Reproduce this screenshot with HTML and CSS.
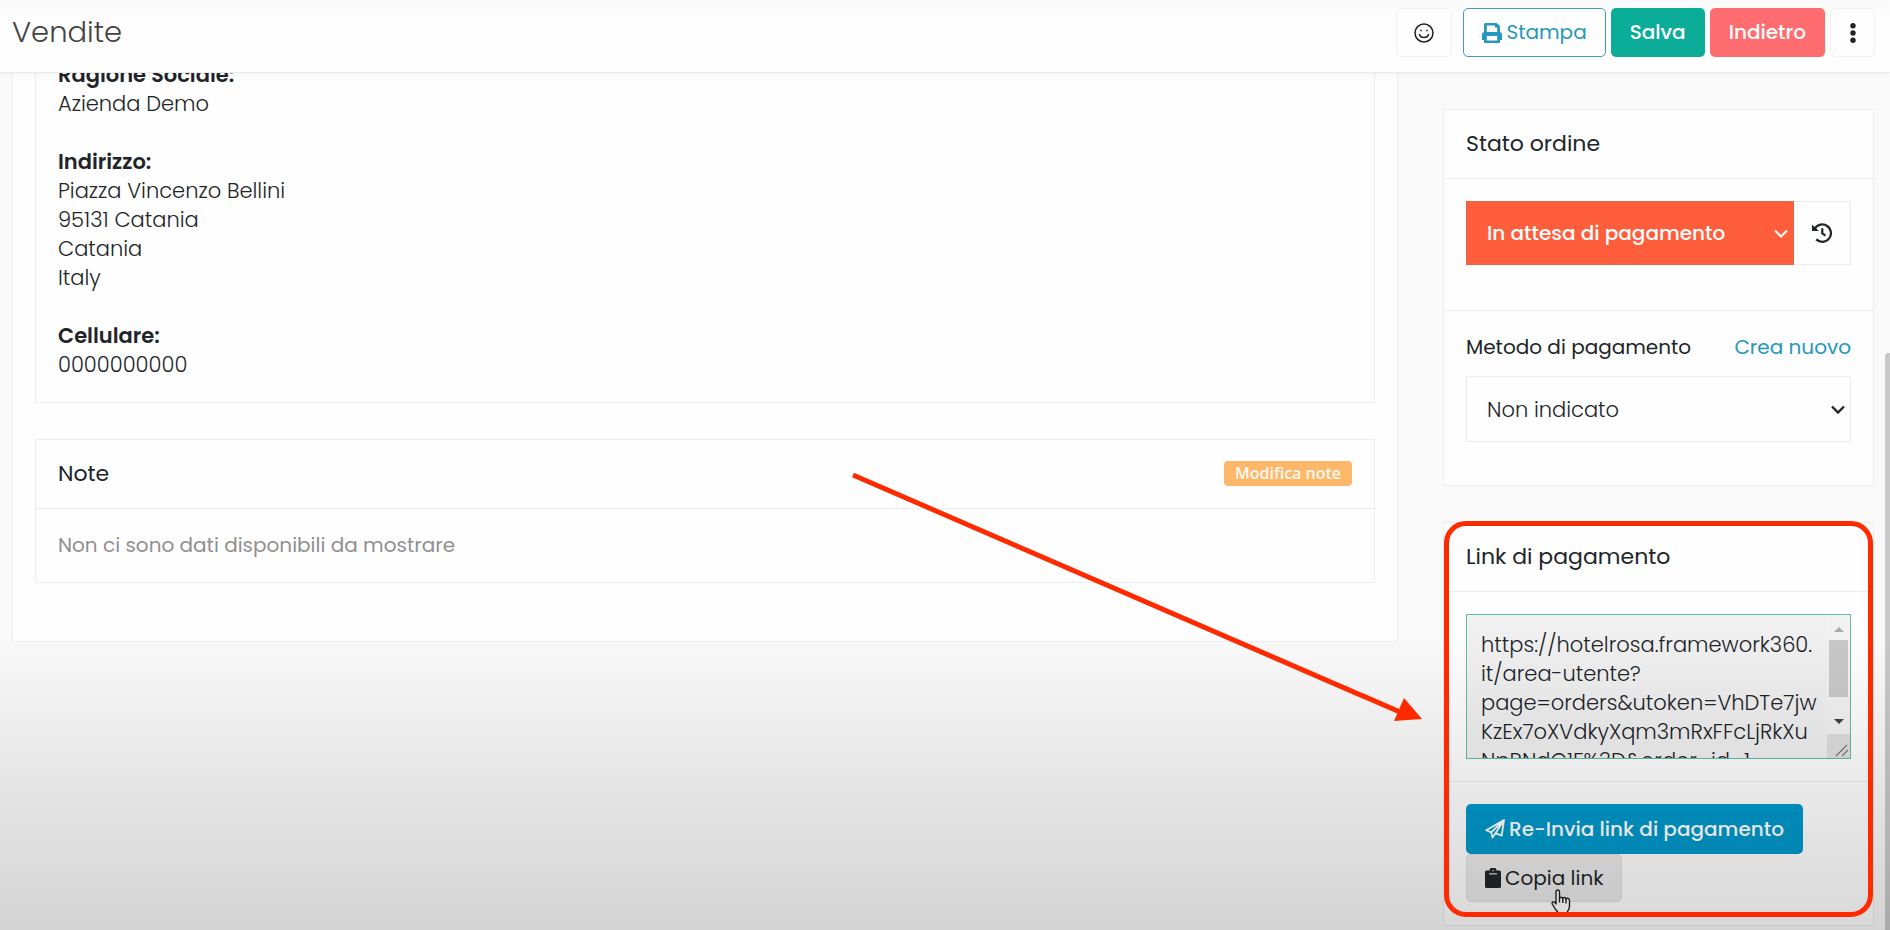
FILE: index.html
```html
<!DOCTYPE html>
<html lang="it">
<head>
<meta charset="utf-8">
<title>Vendite</title>
<link rel="stylesheet" href="styles.css">
</head>
<body>
<header class="topbar">
  <h1 class="topbar-title">Vendite</h1>
  <div class="toolbar">
    <button class="btn btn-light btn-face" type="button" aria-label="Feedback">
      <svg class="icon" viewBox="0 0 20 20" fill="none" stroke="currentColor" stroke-width="1.500" stroke-linecap="round"><circle cx="10" cy="10" r="9"/><path d="M5.500 11.500c1 4 8 4 9 0M7 7.200v.6M13 7.200v.6"/></svg>
    </button>
    <button class="btn btn-outline" type="button">
      <svg class="icon" viewBox="0 0 20 20"><path fill="currentColor" fill-rule="evenodd" d="M3.500 0h11L18 3v6Q20 9 20 11.500V17h-2v3H2v-3H0v-5.500Q0 9 2 9V1.500Q2 0 3.500 0zM4.800 2.500V9h10.400V4.500H13v-2zM4.800 13v4.500h10.400V13z"/></svg>
      Stampa
    </button>
    <button class="btn btn-save" type="button">Salva</button>
    <button class="btn btn-back" type="button">Indietro</button>
    <button class="btn btn-light btn-more" type="button" aria-label="Altro">
      <svg class="icon" viewBox="0 0 20 20" fill="currentColor"><circle cx="10" cy="2.700" r="2.700"/><circle cx="10" cy="10" r="2.700"/><circle cx="10" cy="17.300" r="2.700"/></svg>
    </button>
  </div>
</header>

<main class="page">
  <section class="order">
    <div class="panel customer">
      <dl class="details">
        <dt>Ragione Sociale:</dt>
        <dd>Azienda Demo</dd>
        <dt>Indirizzo:</dt>
        <dd>Piazza Vincenzo Bellini<br>95131 Catania<br>Catania<br>Italy</dd>
        <dt>Cellulare:</dt>
        <dd>0000000000</dd>
      </dl>
    </div>
    <div class="panel">
      <div class="panel-head">
        <h2 class="panel-title">Note</h2>
        <button class="badge" type="button">Modifica note</button>
      </div>
      <p class="empty">Non ci sono dati disponibili da mostrare</p>
    </div>
  </section>

  <aside class="sidebar">
    <section class="panel">
      <div class="panel-head"><h2 class="panel-title" id="status-title">Stato ordine</h2></div>
      <div class="status-body">
        <div class="select-wrap select-status">
          <select class="select" aria-labelledby="status-title"><option>In attesa di pagamento</option></select>
          <svg class="chevron" viewBox="0 0 14 9" fill="none" stroke="currentColor" stroke-width="2"><path d="M1 1.500l6 6 6-6"/></svg>
        </div>
        <button class="history" type="button" aria-label="Cronologia">
          <svg class="icon" viewBox="0 0 20 20" fill="none" stroke="currentColor" stroke-width="2.200"><path d="M2.700 5.800A8.700 8.700 0 1 1 4.200 16.400"/><path d="M0 1.500V8h6.800z" fill="currentColor" stroke="none"/><path d="M10.300 5.200v5.200l3.200 2.200"/></svg>
        </button>
      </div>
      <div class="method">
        <div class="method-head">
          <label for="method">Metodo di pagamento</label>
          <a class="link" href="#">Crea nuovo</a>
        </div>
        <div class="select-wrap">
          <select class="select" id="method"><option>Non indicato</option></select>
          <svg class="chevron" viewBox="0 0 14 9" fill="none" stroke="currentColor" stroke-width="2.400"><path d="M1 1.500l6 6 6-6"/></svg>
        </div>
      </div>
    </section>

    <section class="panel">
      <div class="panel-head"><h2 class="panel-title" id="link-title">Link di pagamento</h2></div>
      <div class="link-body">
        <textarea class="link-text" aria-labelledby="link-title" readonly>https://hotelrosa.framework360.
it/area-utente?
page=orders&amp;utoken=VhDTe7jw
KzEx7oXVdkyXqm3mRxFFcLjRkXu
NpRNdG1F%3D&amp;order_id=1</textarea>
        <div class="bar" aria-hidden="true">
          <span class="bar-up"></span>
          <span class="bar-thumb"></span>
          <span class="bar-down"></span>
          <svg class="grip" viewBox="0 0 23 24" stroke="#777" stroke-width="1.200"><path d="M9 22L20 11M15 22l6-6"/></svg>
        </div>
      </div>
      <div class="link-actions">
        <button class="btn btn-send" type="button">
          <svg class="icon" viewBox="0 0 20 20" fill="none" stroke="currentColor" stroke-width="1.800" stroke-linejoin="round"><path d="M19 1L1.200 11.200l5 2.200L19 1l-2.300 15.600-6.200-2.400-3 4.400-1.300-5.200M10.500 14.200L19 1"/></svg>
          Re-Invia link di pagamento
        </button>
        <button class="btn btn-copy" type="button">
          <svg class="icon icon-clip" viewBox="0 0 16 20"><path fill="currentColor" d="M1.500 2.500H4.500a3.500 3 0 0 1 7 0h3q1.500 0 1.500 1.500v14.500q0 1.500-1.500 1.500h-13Q0 20 0 18.500V4q0-1.500 1.500-1.500z"/><path d="M4 5.800h8M7.300 2.600h1.400" stroke="#d4d3d3" stroke-width="1.300"/></svg>
          Copia link
        </button>
      </div>
      <svg class="pointer" viewBox="0 0 22 26" fill="#fff" stroke="#222" stroke-width="1.400" stroke-linejoin="round"><path d="M6 15V3q0-2 1.700-2T9.500 3v7q0-1.800 1.600-1.800T12.800 10q0-1.500 1.600-1.500T16 10.500q0-1.200 1.500-1.200T19.500 11v6q0 3-2 5.500V26H8v-2.500Q5 20 2.500 15.500 1.500 13.500 3 13t3 2z"/><path d="M9.500 9.500v4M12.800 10v4M16 10.500v4"/></svg>
      <div class="highlight" aria-hidden="true"></div>
    </section>
  </aside>
</main>

<div class="shade" aria-hidden="true"></div>
<div class="page-thumb" aria-hidden="true"></div>
<svg class="arrow" viewBox="0 0 570 252" aria-hidden="true"><path d="M1 3L548 240" stroke="#ff2a00" stroke-width="5" fill="none"/><path d="M552 226L570 247l-28 2z" fill="#ff2a00"/></svg>
</body>
</html>
```

FILE: styles.css
```css
* { box-sizing: border-box; }

body {
  margin: 0;
  height: 100vh;
  display: flex;
  flex-direction: column;
  overflow: hidden;
  background: #fafafb;
  color: #212529;
  font: 300 21px/29px Poppins, Inter, "Open Sans", sans-serif;
}

h1, h2, p, dl, dd { margin: 0; }
button, select, textarea { font: inherit; color: inherit; }
.icon { width: 20px; height: 20px; flex: none; }

.topbar {
  flex: none;
  height: 73px;
  padding: 8px 15px 16px 12px;
  display: flex;
  justify-content: space-between;
  background: linear-gradient(#fafafb, #fefefe 20px);
  border-bottom: 1px solid #ebebeb;
  box-shadow: 0 2px 6px rgba(0, 0, 0, 0.04);
  position: relative;
  z-index: 1;
}
.topbar-title { font-size: 29px; font-weight: 300; line-height: 48px; color: #444; }
.toolbar { display: flex; gap: 5px; }

.btn {
  height: 49px;
  padding: 0 18px;
  display: inline-flex;
  align-items: center;
  justify-content: center;
  gap: 4px;
  border: 1px solid transparent;
  border-radius: 5px;
  font-size: 20px;
  font-weight: 400;
  white-space: nowrap;
}
.btn-light { background: #fefefe; border-color: #f0f0f0; color: #222; }
.btn-face { width: 56px; margin-right: 6px; }
.btn-outline { background: #fff; border-color: #3f9fb8; color: #2498bd; }
.btn-save { background: #0bac98; color: #fff; font-weight: 500; }
.btn-back { background: #ff6d70; color: #fff; font-weight: 500; }
.btn-more { width: 45px; padding: 0; }

.page {
  flex: 1;
  min-height: 0;
  display: grid;
  grid-template-columns: minmax(0, 1386fr) minmax(0, 431fr);
  gap: 45px;
  align-items: start;
  padding: 0 16px 0 12px;
}
.panel { border: 1px solid #ededed; background: #fefefe; }

.order {
  padding: 0 22px 58px;
  display: flex;
  flex-direction: column;
  gap: 36px;
  background: #fefefe;
  border: 1px solid #ededed;
  border-top: 0;
}
.customer { border-top: 0; padding: 0 22px 23px; }
.details { margin-top: -13px; }
.details dt { font-weight: 600; }
.details dd + dt { margin-top: 29px; }

.panel-head {
  padding: 19px 22px 20px;
  display: flex;
  justify-content: space-between;
  align-items: center;
  border-bottom: 1px solid #ededed;
}
.panel-title { font-size: 22px; font-weight: 400; line-height: 29px; }
.badge {
  border: 0;
  border-radius: 4px;
  padding: 0 11px;
  background: #ffb86a;
  color: #fffaf0;
  font: 600 16px/25px "Open Sans", sans-serif;
}
.empty { padding: 22px; color: #909090; font-size: 20px; font-weight: 400; }

.sidebar { padding-top: 36px; display: flex; flex-direction: column; gap: 36px; }
.sidebar .panel { position: relative; }

.select-wrap { position: relative; flex: 1; }
.select {
  width: 100%;
  height: 66px;
  padding: 0 20px;
  appearance: none;
  border: 1px solid #ebebeb;
  border-radius: 0;
  background: #fefefe;
}
.chevron { position: absolute; right: 6px; top: 50%; width: 14px; height: 9px; margin-top: -4px; }
.status-body { display: flex; padding: 22px 22px 45px; border-bottom: 1px solid #ededed; }
.select-status { color: #fff; }
.select-status .select { height: 64px; background: #ff5e3c; border-color: #e0684c; font-size: 20px; font-weight: 500; }
.history {
  width: 57px;
  display: grid;
  place-items: center;
  border: 1px solid #ebebeb;
  border-left: 0;
  background: #fefefe;
}
.method { padding: 22px 22px 43px; }
.method-head { display: flex; justify-content: space-between; margin-bottom: 14px; font-size: 20px; font-weight: 400; }
.link { color: #2498bd; text-decoration: none; }

.link-body { position: relative; padding: 22px; border-bottom: 1px solid #ebebeb; }
.link-text {
  display: block;
  width: 100%;
  height: 145px;
  padding: 15px 14px;
  border: 1px solid #62bda5;
  background: #f0f0f0;
  resize: none;
  overflow: hidden;
  white-space: pre;
  outline: 0;
}
.bar {
  position: absolute;
  right: 23px;
  top: 23px;
  bottom: 23px;
  width: 23px;
  display: flex;
  flex-direction: column;
  align-items: center;
  background: #f2f2f2;
}
.bar-up, .bar-down { border: 5px solid transparent; }
.bar-up { border-bottom-color: #aaa; border-top: 0; margin: 12px 0 8px; }
.bar-down { border-top-color: #444; border-bottom: 0; margin: 22px 0 10px; }
.bar-thumb { width: 19px; height: 57px; background: #c9c9c9; }
.grip { width: 23px; height: 24px; background: #dfdfdf; }

.link-actions { padding: 22px 22px 23px; display: flex; flex-direction: column; align-items: flex-start; }
.btn-send { height: 50px; background: #0098ca; color: #fff; font-weight: 500; }
.btn-copy { height: 48px; background: #ebeaea; border-color: #dfdfdf; }
.icon-clip { width: 16px; }

/* Overlays above the page content */
.pointer { position: absolute; left: 106px; bottom: 10px; width: 22px; height: 26px; }
.highlight {
  position: absolute;
  z-index: 3;
  inset: -2px 0 8px 0;
  border: 5px solid #ff2a00;
  border-radius: 22px;
}
.shade {
  position: fixed;
  inset: 68vh 0 0;
  background: linear-gradient(rgba(0, 0, 0, 0), rgba(0, 0, 0, 0.08) 50%, rgba(0, 0, 0, 0.15));
  pointer-events: none;
  z-index: 2;
}
.page-thumb { position: fixed; right: 0; top: 353px; bottom: 0; width: 5px; background: #c9c9c9; border-radius: 3px 0 0; }
.arrow { position: fixed; left: 852px; top: 472px; width: 570px; height: 252px; z-index: 3; }
```
